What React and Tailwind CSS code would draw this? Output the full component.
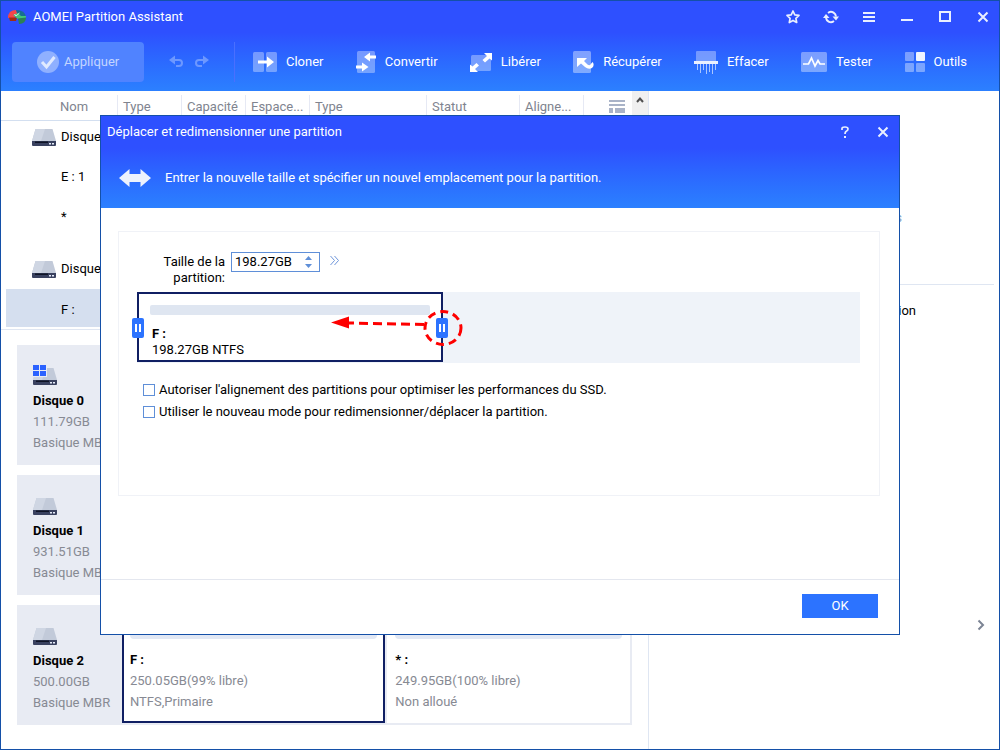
import React, { useState } from "react";

function DriveShape() {
  return (
    <>
      <path d="M3.5 0h17L24 12H0z" fill="#c2cad9" />
      <path d="M3.5 0H13L9 12H0z" fill="#cfd6e3" />
      <path d="M0 12h24v4q0 1-1 1H1q-1 0-1-1z" fill="#39415f" />
      <path d="M3 12.5h13v1.5H3z" fill="#0f1426" />
      <path d="M17 14h2v1.5h-2zM20 14h2v1.5h-2z" fill="#e6ecfa" />
    </>
  );
}

function DriveIcon() {
  return (
    <svg className="block h-[17px] w-6 shrink-0" viewBox="0 0 24 17" aria-hidden="true">
      <DriveShape />
    </svg>
  );
}

function SystemDriveIcon() {
  return (
    <svg className="block h-5 w-6 shrink-0" viewBox="0 0 24 20" aria-hidden="true">
      <g transform="translate(0 3)">
        <DriveShape />
      </g>
      <path d="M0 0h14v12H0z" fill="#e8ebf3" />
      <path d="M0 0h6v5H0zM7 0h6v5H7zM0 6h6v5H0zM7 6h6v5H7z" fill="#2b62ff" />
    </svg>
  );
}

const toolIcons = {
  clone: (
    <svg className="h-5 w-6" viewBox="0 0 24 20">
      <rect width="11" height="20" rx="1.5" fill="#fff" opacity=".35" />
      <rect x="13" width="11" height="20" rx="1.5" fill="#fff" opacity=".35" />
      <path d="M5 8.5h9V4.5l7 5.500-7 5.500v-4H5z" fill="#fff" />
    </svg>
  ),
  convert: (
    <svg className="h-[22px] w-5" viewBox="0 0 20 22">
      <rect x="1" width="18" height="22" rx="1.500" fill="#fff" opacity=".35" />
      <path d="M20 4.500h-6V1.500L8 6l6 4.500v-3h6zM0 14.500h6v-3l6.500 4.500L6 20.500v-3H0z" fill="#fff" />
    </svg>
  ),
  free: (
    <svg className="h-[19px] w-[22px]" viewBox="0 0 22 19">
      <rect x="1" y="2" width="20" height="16" rx="1.500" fill="#fff" opacity=".35" />
      <path d="M14 0h8v7.500l-2.500-2-4.500 4-2.500-2.500L17 3zM0 11.500l2.500 2 4-3.500 2.500 2.500L5 16l3 3H0z" fill="#fff" />
    </svg>
  ),
  recover: (
    <svg className="h-[22px] w-[21px]" viewBox="0 0 21 22">
      <rect width="18" height="22" rx="1.500" fill="#fff" opacity=".4" />
      <path d="M4 7h10l-3 3 3.500 3.500q2 1.500 3 0 .500-1 2-2.500 2.500 3-.500 6-3.500 2-7-1L8 12.500 4 16z" fill="#fff" />
    </svg>
  ),
  wipe: (
    <svg className="h-[23px] w-6" viewBox="0 0 24 23">
      <path d="M2 1q0-1 1-1h18q1 0 1 1v9H2z" fill="#fff" opacity=".35" />
      <path d="M0 10h24v3H0z" fill="#fff" opacity=".9" />
      <path d="M3.500 13v6M6.500 13v9M9.500 13v6M12.500 13v10M15.500 13v8M18.500 13v10M21.500 13v6" stroke="#fff" strokeWidth="1" opacity=".6" />
    </svg>
  ),
  test: (
    <svg className="h-5 w-[26px]" viewBox="0 0 26 20">
      <rect width="26" height="20" rx="1.500" fill="#fff" opacity=".38" />
      <path d="M2 12h5.500l3-6 3.500 8 3-5.500 2 3.500h5" fill="none" stroke="#fff" strokeWidth="1.700" />
    </svg>
  ),
  tools: (
    <svg className="h-5 w-5" viewBox="0 0 20 20">
      <path d="M1 0h7q1 0 1 1v7q0 1-1 1H1Q0 9 0 8V1q0-1 1-1zM1 11h7q1 0 1 1v7q0 1-1 1H1q-1 0-1-1v-7q0-1 1-1zM12 11h7q1 0 1 1v7q0 1-1 1h-7q-1 0-1-1v-7q0-1 1-1z" fill="#fff" opacity=".38" />
      <rect x="11" width="9" height="9" rx="1" fill="#f0f5ff" />
    </svg>
  ),
};

const tools = [
  { label: "Cloner", icon: "clone" },
  { label: "Convertir", icon: "convert" },
  { label: "Libérer", icon: "free" },
  { label: "Récupérer", icon: "recover" },
  { label: "Effacer", icon: "wipe" },
  { label: "Tester", icon: "test" },
  { label: "Outils", icon: "tools" },
];

function WindowButton({ label, children }) {
  return (
    <button type="button" aria-label={label} className="flex h-4 w-4 items-center justify-center">
      <svg className="h-4 w-4" viewBox="0 0 16 16" fill="none" stroke="#e9efff" strokeWidth="2">
        {children}
      </svg>
    </button>
  );
}

function Header() {
  return (
    <header className="bg-linear-to-b from-[#2e50ff] from-35% to-[#2c80ff] text-white">
      <div className="flex h-8 items-center pr-2 pl-[7px]">
        <svg className="mr-[7px] h-4 w-[18px]" viewBox="0 0 18 16" aria-hidden="true">
          <path d="M0 9Q0 1 8 1l2 5-4 3H0z" fill="#f2474b" />
          <path d="M1 8.500h8L8 12H2z" fill="#a12d10" />
          <path d="M8 1q9 0 10 7h-5L9 4z" fill="#176e92" />
          <path d="M5 6l5-2 3 3h5v2l-8 1z" fill="#42c67b" />
          <path d="M10 9.500l8-1q0 6-7 6.500z" fill="#2c8054" />
          <path d="M6.500 5l1.500 2 3.500-3" fill="none" stroke="#cdeee0" strokeWidth="1" />
        </svg>
        <h1 className="flex-1">AOMEI Partition Assistant</h1>
        <div className="flex gap-[22px]">
          <WindowButton label="Favoris">
            <path d="M8 2l1.800 3.900 4.200.500-3.100 2.900.800 4.200L8 11.400l-3.700 2.100.800-4.200L2 6.400l4.200-.500z" strokeWidth="1.700" strokeLinejoin="round" />
          </WindowButton>
          <WindowButton label="Actualiser">
            <path d="M3 9a5.200 5.200 0 0 0 7 3.800M13 7.500A5.200 5.200 0 0 0 6 3.200M5 4l1.500-1M11 12l-1.500 1" />
            <path d="M0 9l3-4 3.500 4zM9.500 7.500H16l-3 4z" fill="#e9efff" stroke="none" />
          </WindowButton>
          <WindowButton label="Menu">
            <path d="M2 4h12M2 8h12M2 12h12" />
          </WindowButton>
          <WindowButton label="Réduire">
            <path d="M2 11h12" />
          </WindowButton>
          <WindowButton label="Agrandir">
            <path d="M3 3h10v9H3z" />
          </WindowButton>
          <WindowButton label="Fermer">
            <path d="M3.500 3.500l9 9M12.500 3.500l-9 9" />
          </WindowButton>
        </div>
      </div>
      <div className="flex h-[58px] items-center pl-[11px]">
        <button type="button" className="flex h-10 w-[132px] items-center gap-[5px] rounded bg-[#5083ff] pl-[25px] text-[#c3d5ff]">
          <svg className="h-[22px] w-[22px]" viewBox="0 0 22 22" aria-hidden="true">
            <circle cx="11" cy="11" r="11" fill="#8fb0ff" />
            <path d="M5 11l4.500 5 8-10" fill="none" stroke="#e0eaff" strokeWidth="3" />
          </svg>
          Appliquer
        </button>
        <div className="ml-[25px] flex gap-3">
          <button type="button" aria-label="Annuler">
            <svg className="h-3.5 w-3.5" viewBox="0 0 14 14">
              <path d="M4 5h6q3 0 3 3t-3 3H7" fill="none" stroke="#6d98ff" strokeWidth="2" />
              <path d="M0 5l6-4.500v9z" fill="#6d98ff" />
            </svg>
          </button>
          <button type="button" aria-label="Rétablir">
            <svg className="h-3.5 w-3.5" viewBox="0 0 14 14">
              <path d="M10 5H4Q1 5 1 8t3 3h3" fill="none" stroke="#6d98ff" strokeWidth="2" />
              <path d="M14 5L8 .500v9z" fill="#6d98ff" />
            </svg>
          </button>
        </div>
        <div className="ml-[25px] h-10 w-px bg-[#4a6fff]" />
        <nav className="ml-[18px] flex flex-1 items-center justify-between pr-8">
          {tools.map((t) => (
            <button key={t.label} type="button" className="flex items-center gap-[9px]">
              {toolIcons[t.icon]}
              {t.label}
            </button>
          ))}
        </nav>
      </div>
    </header>
  );
}

function VolumeTable() {
  const columns = ["Type", "Capacité", "Espace...", "Type", "Statut", "Aligne..."];
  return (
    <table className="w-full table-fixed border-separate border-spacing-0 text-left">
      <colgroup>
        <col className="w-[116px]" />
        <col className="w-16" />
        <col className="w-16" />
        <col className="w-16" />
        <col className="w-[117px]" />
        <col className="w-[93px]" />
        <col className="w-16" />
        <col />
      </colgroup>
      <thead className="text-[#80848f]">
        <tr className="h-[30px]">
          <th className="border-b border-[#d3dff0] p-0 pt-0.5 pl-[59px] font-normal">Nom</th>
          {columns.map((c, i) => (
            <th key={i} className="border-b border-[#d3dff0] p-0 pt-1 font-normal">
              <div className="flex h-[25px] items-center border-l border-[#e6e9f4] pb-0.5 pl-[5px]">{c}</div>
            </th>
          ))}
          <th className="border-b border-[#d3dff0] p-0 pt-1 font-normal">
            <div className="flex h-[25px] items-center border-l border-[#e6e9f4] pb-0.5 pl-[25px]">
              <button type="button" aria-label="Colonnes">
                <svg className="block h-[13px] w-4" viewBox="0 0 16 13">
                  <path d="M0 0h16v2H0zM0 4h16v2H0zM0 8h4v5H0zM6 8h10v5H6z" fill="#a9b3c8" />
                </svg>
              </button>
            </div>
          </th>
        </tr>
      </thead>
      <tbody>
        <tr className="h-8">
          <td colSpan={8} className="p-0 pl-[31px]">
            <div className="flex items-center gap-[5px]"><DriveIcon />Disque 1</div>
          </td>
        </tr>
        <tr className="h-12"><td colSpan={8} className="p-0 pl-[60px]">E : 1</td></tr>
        <tr className="h-8"><td colSpan={8} className="p-0 pl-[60px]">*</td></tr>
        <tr className="h-14">
          <td colSpan={8} className="p-0 pt-4 pl-[31px]">
            <div className="flex items-center gap-[5px]"><DriveIcon />Disque 2</div>
          </td>
        </tr>
        <tr className="h-[38px]">
          <td colSpan={8} className="border-l-[5px] border-white bg-[#d5dfef] bg-clip-padding p-0 pt-1 pl-[55px]">F :</td>
        </tr>
      </tbody>
    </table>
  );
}

const disks = [
  { name: "Disque 0", size: "111.79GB", kind: "Basique MBR", system: true, parts: [] },
  { name: "Disque 1", size: "931.51GB", kind: "Basique MBR", parts: [] },
  {
    name: "Disque 2",
    size: "500.00GB",
    kind: "Basique MBR",
    parts: [
      { name: "F :", size: "250.05GB(99% libre)", kind: "NTFS,Primaire", selected: true },
      { name: "* :", size: "249.95GB(100% libre)", kind: "Non alloué" },
    ],
  },
];

function DiskCard({ disk }) {
  return (
    <article className="flex h-[120px] bg-[#e8ebf3] pr-0.5 pb-0.5 leading-[21px] text-[#878a93]">
      <div className="flex w-[105px] shrink-0 flex-col pt-5 pl-4 whitespace-nowrap">
        <div className="flex h-[25px] items-start">
          {disk.system ? <SystemDriveIcon /> : <div className="pt-[3px]"><DriveIcon /></div>}
        </div>
        <h2 className="font-bold text-black">{disk.name}</h2>
        <p>{disk.size}</p>
        <p>{disk.kind}</p>
      </div>
      <div className="flex flex-1 gap-0.5">
        {disk.parts.map((p) => (
          <div
            key={p.name}
            className={
              p.selected
                ? "flex-[264] border-2 border-[#101f63] bg-white px-1.5 pt-[22px]"
                : "mt-0.5 flex-[242] bg-white px-2 pt-[22px]"
            }
          >
            <div className="mb-2.5 h-2.5 rounded-sm bg-[#e2e8f4]" />
            <h3 className="font-bold text-black">{p.name}</h3>
            <p>{p.size}</p>
            <p>{p.kind}</p>
          </div>
        ))}
      </div>
    </article>
  );
}

function Grip({ label }) {
  return (
    <button type="button" aria-label={label} className="flex h-5 w-3 items-center justify-center gap-0.5 rounded-xs bg-[#2c73ff]">
      <span className="h-2 w-0.5 bg-white" />
      <span className="h-2 w-0.5 bg-white" />
    </button>
  );
}

function CheckRow({ id, children }) {
  return (
    <div className="flex h-[22px] items-center gap-1">
      <input id={id} type="checkbox" className="h-3 w-3 appearance-none border border-[#5f8fd8] bg-white checked:bg-[#2c73ff]" />
      <label htmlFor={id}>{children}</label>
    </div>
  );
}

function ResizeDialog() {
  const [size, setSize] = useState("198.27GB");
  return (
    <div className="absolute inset-0 flex items-center justify-center">
      <section role="dialog" aria-labelledby="resize-title" className="flex min-h-[520px] w-full max-w-[800px] flex-col border border-[#1450a8] bg-white">
        <header className="h-[92px] bg-linear-to-b from-[#2e50ff] from-35% to-[#2c80ff] text-white">
          <div className="flex h-8 items-center pr-2 pl-1.5">
            <h2 id="resize-title" className="flex-1">Déplacer et redimensionner une partition</h2>
            <div className="flex gap-[22px]">
              <WindowButton label="Aide">
                <path d="M5 6V4.500Q5 3 8 3t3 2q0 1.500-1.700 2.300Q8 8 8 10" strokeWidth="1.700" />
                <path d="M7 12h2v2H7z" fill="#e9efff" stroke="none" />
              </WindowButton>
              <WindowButton label="Fermer la fenêtre">
                <path d="M3.500 3.500l9 9M12.500 3.500l-9 9" />
              </WindowButton>
            </div>
          </div>
          <div className="flex h-[60px] items-center gap-3.5 pl-[18px]">
            <svg className="h-[18px] w-8" viewBox="0 0 32 18" aria-hidden="true">
              <path d="M0 9L10.500 0v5h11V0L32 9l-10.500 9v-5h-11v5z" fill="#edf2fd" />
            </svg>
            <p>Entrer la nouvelle taille et spécifier un nouvel emplacement pour la partition.</p>
          </div>
        </header>

        <div className="flex-1 pt-[23px] pr-[19px] pl-[17px]">
          <div className="h-[265px] border border-[#f0f2f7] pt-5 pr-[19px] pl-[18px]">
            <div className="flex items-start">
              <label htmlFor="size" className="w-[88px] pt-0.5 text-right leading-4">Taille de la partition:</label>
              <div className="ml-1.5 flex h-5 w-[89px] items-center border border-[#5f8fd8] pr-[7px] pl-[3px]">
                <input id="size" type="text" value={size} onChange={(e) => setSize(e.target.value)} className="w-full min-w-0 bg-transparent outline-none" />
                <div className="flex flex-col gap-1">
                  <button type="button" aria-label="Augmenter">
                    <svg className="block h-1 w-[7px]" viewBox="0 0 7 4"><path d="M3.500 0L7 4H0z" fill="#5f8fd8" /></svg>
                  </button>
                  <button type="button" aria-label="Diminuer">
                    <svg className="block h-1 w-[7px]" viewBox="0 0 7 4"><path d="M0 0h7L3.500 4z" fill="#5f8fd8" /></svg>
                  </button>
                </div>
              </div>
              <button type="button" aria-label="Options avancées" className="mt-1 ml-2.5">
                <svg className="block h-[9px] w-[9px]" viewBox="0 0 9 9"><path d="M.500 0l4 4.500-4 4.500M4.500 0l4 4.500-4 4.500" fill="none" stroke="#6f96da" /></svg>
              </button>
            </div>

            <div className="mt-1.5 bg-[#eff3f9] pb-px">
              <div className="relative h-[70px] w-[306px] border-2 border-[#101f63] bg-white px-[11px] pt-[11px]">
                <div className="h-2.5 rounded-xs bg-[#dfe6f1]" />
                <div className="pt-[11px] pl-0.5 leading-4">
                  <p className="font-bold">F :</p>
                  <p>198.27GB NTFS</p>
                </div>
                <div className="absolute top-6 -left-[7px]"><Grip label="Bord gauche" /></div>
                <div className="absolute top-6 -right-[7px]"><Grip label="Bord droit" /></div>
                <svg className="pointer-events-none absolute top-4 -right-[22px] h-9 w-[132px]" viewBox="0 0 132 36" aria-hidden="true">
                  <path d="M0 12.500L18 6.500v12z" fill="#fe0000" />
                  <path d="M17 13l77 1.500" stroke="#fe0000" strokeWidth="3" strokeDasharray="9 5" strokeDashoffset="3" strokeLinecap="butt" />
                  <ellipse cx="112" cy="18" rx="18" ry="16.500" fill="none" stroke="#fe0000" strokeWidth="3" strokeDasharray="8 5" />
                </svg>
              </div>
            </div>

            <div className="mt-4 pl-1.5">
              <CheckRow id="align">Autoriser l'alignement des partitions pour optimiser les performances du SSD.</CheckRow>
              <CheckRow id="mode">Utiliser le nouveau mode pour redimensionner/déplacer la partition.</CheckRow>
            </div>
          </div>
        </div>

        <footer className="flex h-[55px] items-start justify-end border-t border-[#e4e7ef] pt-3.5 pr-[21px]">
          <button type="button" className="h-6 w-[76px] bg-[#2c73ff] text-white">OK</button>
        </footer>
      </section>
    </div>
  );
}

export default function App() {
  return (
    <div className="relative flex min-h-screen flex-col border border-[#1450a8] bg-white font-['Roboto',sans-serif] text-[13px] leading-4 text-black">
      <Header />
      <main className="flex flex-1">
        <section className="w-[647px] shrink-0">
          <div className="flex border-b border-[#dfe6f2] pb-0.5">
            <div className="min-w-0 flex-1"><VolumeTable /></div>
            <div className="w-4 bg-[#f0f0f0]">
              <button type="button" aria-label="Défiler vers le haut" className="flex h-[18px] w-4 items-center justify-center">
                <svg className="h-2 w-2" viewBox="0 0 8 8"><path d="M1 6l3-3.500L7 6" fill="none" stroke="#505050" strokeWidth="2" /></svg>
              </button>
            </div>
          </div>
          <div className="flex flex-col gap-2.5 pt-[15px] pr-4 pb-6 pl-4">
            {disks.map((d) => <DiskCard key={d.name} disk={d} />)}
          </div>
        </section>
        <aside className="flex flex-1 flex-col border-l border-[#dfe6f2]">
          <div className="mr-[5px] flex h-[194px] items-end justify-end border-b border-[#dfe6f2] pr-[92px] pb-[58px] text-[#80a0c8]">
            Propriétés
          </div>
          <div className="flex h-[51px] items-center justify-end pr-[83px]">Redimensionner partition</div>
          <div className="flex flex-1 items-end justify-end pr-3 pb-[115px]">
            <button type="button" aria-label="Suivant">
              <svg className="h-[18px] w-3" viewBox="0 0 12 18"><path d="M3.500 4.500L8 9l-4.500 4.500" fill="none" stroke="#7c8494" strokeWidth="2" /></svg>
            </button>
          </div>
        </aside>
      </main>
      <ResizeDialog />
    </div>
  );
}
